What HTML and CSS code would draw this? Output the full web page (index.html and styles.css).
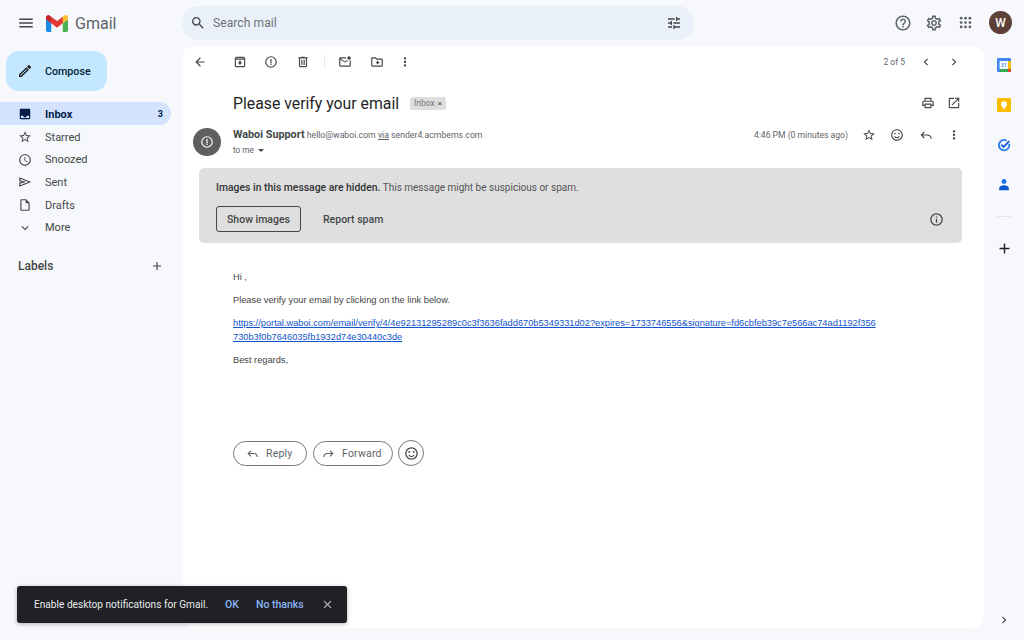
FILE: index.html
```html
<!DOCTYPE html>
<html lang="en">
<head>
<meta charset="utf-8">
<title>Gmail</title>
<link rel="stylesheet" href="styles.css">
</head>
<body>
<svg class="defs" aria-hidden="true">
<symbol id="i-menu" viewBox="0 0 24 24"><path d="M3 18h18v-2H3v2zm0-5h18v-2H3v2zm0-7v2h18V6H3z"/></symbol>
<symbol id="i-search" viewBox="0 0 24 24"><path d="M15.5 14h-.79l-.28-.27A6.471 6.471 0 0 0 16 9.5 6.5 6.5 0 1 0 9.5 16c1.61 0 3.09-.59 4.23-1.57l.27.28v.79l5 4.99L20.49 19l-4.99-5zm-6 0C7.01 14 5 11.99 5 9.5S7.01 5 9.5 5 14 7.01 14 9.5 11.99 14 9.5 14z"/></symbol>
<symbol id="i-tune" viewBox="0 0 24 24"><path d="M3 17v2h6v-2H3zM3 5v2h10V5H3zm10 16v-2h8v-2h-8v-2h-2v6h2zM7 9v2H3v2h4v2h2V9H7zm14 4v-2H11v2h10zm-6-4h2V7h4V5h-4V3h-2v6z"/></symbol>
<symbol id="i-help" viewBox="0 0 24 24"><path d="M11 18h2v-2h-2v2zm1-16C6.48 2 2 6.48 2 12s4.48 10 10 10 10-4.48 10-10S17.52 2 12 2zm0 18c-4.41 0-8-3.59-8-8s3.59-8 8-8 8 3.59 8 8-3.59 8-8 8zm0-14c-2.21 0-4 1.79-4 4h2c0-1.1.9-2 2-2s2 .9 2 2c0 2-3 1.75-3 5h2c0-2.25 3-2.5 3-5 0-2.21-1.79-4-4-4z"/></symbol>
<symbol id="i-gear" viewBox="0 0 24 24"><path d="M19.43 12.98c.04-.32.07-.64.07-.98 0-.34-.03-.66-.07-.98l2.11-1.65c.19-.15.24-.42.12-.64l-2-3.46c-.09-.16-.26-.25-.44-.25-.06 0-.12.01-.17.03l-2.49 1c-.52-.4-1.08-.73-1.69-.98l-.38-2.65C14.46 2.18 14.25 2 14 2h-4c-.25 0-.46.18-.49.42l-.38 2.65c-.61.25-1.17.59-1.69.98l-2.49-1c-.06-.02-.12-.03-.18-.03-.17 0-.34.09-.43.25l-2 3.46c-.13.22-.07.49.12.64l2.11 1.65c-.04.32-.07.65-.07.98 0 .33.03.66.07.98l-2.11 1.65c-.19.15-.24.42-.12.64l2 3.46c.09.16.26.25.44.25.06 0 .12-.01.17-.03l2.49-1c.52.4 1.08.73 1.69.98l.38 2.65c.03.24.24.42.49.42h4c.25 0 .46-.18.49-.42l.38-2.65c.61-.25 1.17-.59 1.69-.98l2.49 1c.06.02.12.03.18.03.17 0 .34-.09.43-.25l2-3.46c.12-.22.07-.49-.12-.64l-2.11-1.65zm-1.98-1.71c.04.31.05.52.05.73 0 .21-.02.43-.05.73l-.14 1.13.89.7 1.08.84-.7 1.21-1.27-.51-1.04-.42-.9.68c-.43.32-.84.56-1.25.73l-1.06.43-.16 1.13-.2 1.35h-1.4l-.19-1.35-.16-1.13-1.06-.43c-.43-.18-.83-.41-1.23-.71l-.91-.7-1.06.43-1.27.51-.7-1.21 1.08-.84.89-.7-.14-1.13c-.03-.31-.05-.54-.05-.74s.02-.43.05-.73l.14-1.13-.89-.7-1.08-.84.7-1.21 1.27.51 1.04.42.9-.68c.43-.32.84-.56 1.25-.73l1.06-.43.16-1.13.2-1.35h1.39l.19 1.35.16 1.13 1.06.43c.43.18.83.41 1.23.71l.91.7 1.06-.43 1.27-.51.7 1.21-1.07.85-.89.7.14 1.13zM12 8c-2.21 0-4 1.79-4 4s1.79 4 4 4 4-1.79 4-4-1.79-4-4-4zm0 6c-1.1 0-2-.9-2-2s.9-2 2-2 2 .9 2 2-.9 2-2 2z"/></symbol>
<symbol id="i-apps" viewBox="0 0 24 24"><circle cx="5" cy="5" r="2.2"/><circle cx="12" cy="5" r="2.2"/><circle cx="19" cy="5" r="2.2"/><circle cx="5" cy="12" r="2.2"/><circle cx="12" cy="12" r="2.2"/><circle cx="19" cy="12" r="2.2"/><circle cx="5" cy="19" r="2.2"/><circle cx="12" cy="19" r="2.2"/><circle cx="19" cy="19" r="2.2"/></symbol>
<symbol id="i-back" viewBox="0 0 24 24"><path d="M20 11H7.83l5.59-5.59L12 4l-8 8 8 8 1.41-1.41L7.83 13H20v-2z"/></symbol>
<symbol id="i-archive" viewBox="0 0 24 24"><path d="M20.54 5.23l-1.39-1.68C18.88 3.21 18.47 3 18 3H6c-.47 0-.88.21-1.16.55L3.46 5.23C3.17 5.57 3 6.02 3 6.5V19c0 1.1.9 2 2 2h14c1.1 0 2-.9 2-2V6.5c0-.48-.17-.93-.46-1.27zM6.24 5h11.52l.81.97H5.44l.8-.97zM5 19V8h14v11H5zm8.45-9h-2.9v3H8l4 4 4-4h-2.55z"/></symbol>
<symbol id="i-report" viewBox="0 0 24 24"><path d="M12 2a10 10 0 1 0 0 20 10 10 0 0 0 0-20zm0 18a8 8 0 1 1 0-16 8 8 0 0 1 0 16zM11 7h2v7h-2zm0 8h2v2h-2z"/></symbol>
<symbol id="i-delete" viewBox="0 0 24 24"><path d="M15 4V3H9v1H4v2h1v13c0 1.1.9 2 2 2h10c1.1 0 2-.9 2-2V6h1V4h-5zm2 15H7V6h10v13zM9 8h2v9H9zm4 0h2v9h-2z"/></symbol>
<symbol id="i-unread" viewBox="0 0 24 24"><path d="M22 8.98V18c0 1.1-.9 2-2 2H4c-1.1 0-2-.9-2-2V6c0-1.1.9-2 2-2h10.1c-.06.32-.1.66-.1 1s.04.68.1 1H4l8 5 3.67-2.29c.47.43 1.02.76 1.63.98L12 13 4 8v10h16V9.9c.74-.15 1.42-.48 2-.92zM16 5c0 1.66 1.34 3 3 3s3-1.34 3-3-1.34-3-3-3-3 1.34-3 3z"/></symbol>
<symbol id="i-move" viewBox="0 0 24 24"><path d="M20 6h-8l-2-2H4c-1.1 0-2 .9-2 2v12c0 1.1.9 2 2 2h16c1.1 0 2-.9 2-2V8c0-1.1-.9-2-2-2zm0 12H4V6h5.17l2 2H20v10zM12 10h2v2h2v2h-2v2h-2v-2h-2v-2h2z"/></symbol>
<symbol id="i-more" viewBox="0 0 24 24"><path d="M12 8c1.1 0 2-.9 2-2s-.9-2-2-2-2 .9-2 2 .9 2 2 2zm0 2c-1.1 0-2 .9-2 2s.9 2 2 2 2-.9 2-2-.9-2-2-2zm0 6c-1.1 0-2 .9-2 2s.9 2 2 2 2-.9 2-2-.9-2-2-2z"/></symbol>
<symbol id="i-left" viewBox="0 0 24 24"><path d="M15.41 7.41L14 6l-6 6 6 6 1.41-1.41L10.83 12z"/></symbol>
<symbol id="i-right" viewBox="0 0 24 24"><path d="M10 6L8.59 7.41 13.17 12l-4.58 4.59L10 18l6-6z"/></symbol>
<symbol id="i-print" viewBox="0 0 24 24"><path d="M19 8h-1V3H6v5H5c-1.66 0-3 1.34-3 3v6h4v4h12v-4h4v-6c0-1.66-1.34-3-3-3zM8 5h8v3H8V5zm8 12v2H8v-4h8v2zm2-2v-2H6v2H4v-4c0-.55.45-1 1-1h14c.55 0 1 .45 1 1v4h-2z"/></symbol>
<symbol id="i-open" viewBox="0 0 24 24"><path d="M19 19H5V5h7V3H5c-1.11 0-2 .9-2 2v14c0 1.1.89 2 2 2h14c1.1 0 2-.9 2-2v-7h-2v7zM14 3v2h3.59l-9.83 9.83 1.41 1.41L19 6.41V10h2V3h-7z"/></symbol>
<symbol id="i-star" viewBox="0 0 24 24"><path d="M22 9.24l-7.19-.62L12 2 9.19 8.63 2 9.24l5.46 4.73L5.82 21 12 17.27 18.18 21l-1.63-7.03L22 9.24zM12 15.4l-3.76 2.27 1-4.28-3.32-2.88 4.38-.38L12 6.1l1.71 4.04 4.38.38-3.32 2.88 1 4.28L12 15.4z"/></symbol>
<symbol id="i-smile" viewBox="0 0 24 24"><path d="M11.99 2C6.47 2 2 6.48 2 12s4.47 10 9.99 10C17.52 22 22 17.52 22 12S17.52 2 11.99 2zM12 20c-4.42 0-8-3.58-8-8s3.58-8 8-8 8 3.58 8 8-3.58 8-8 8zm3.5-9c.83 0 1.5-.67 1.5-1.5S16.33 8 15.5 8 14 8.67 14 9.5s.67 1.5 1.5 1.5zm-7 0c.83 0 1.5-.67 1.5-1.5S9.33 8 8.5 8 7 8.67 7 9.5 7.67 11 8.5 11zM7 14h1.9c.6 1.3 1.7 2 3.1 2s2.5-.7 3.1-2H17c-.7 2.2-2.6 3.6-5 3.6S7.7 16.2 7 14z"/></symbol>
<symbol id="i-reply" viewBox="0 0 24 24"><path d="M10 7.4L8.6 6 2.6 12l6 6 1.4-1.4L6.4 13H14c3.3 0 5.3 1.8 6 5.5h2c-.6-5-3.6-7.5-8-7.500H6.4z"/></symbol>
<symbol id="i-forward" viewBox="0 0 24 24"><path d="M14 7.4L15.4 6l6 6-6 6-1.4-1.4 3.6-3.6H10c-3.3 0-5.3 1.8-6 5.5H2c.6-5 3.6-7.5 8-7.500h7.6z"/></symbol>
<symbol id="i-info" viewBox="0 0 24 24"><path d="M11 7h2v2h-2zm0 4h2v6h-2zm1-9C6.48 2 2 6.48 2 12s4.48 10 10 10 10-4.48 10-10S17.52 2 12 2zm0 18c-4.41 0-8-3.59-8-8s3.59-8 8-8 8 3.59 8 8-3.59 8-8 8z"/></symbol>
<symbol id="i-edit" viewBox="0 0 24 24"><path d="M14.06 9.02l.92.92L5.92 19H5v-.92l9.06-9.06M17.66 3c-.25 0-.51.1-.7.29l-1.83 1.83 3.75 3.75 1.83-1.83c.39-.39.39-1.02 0-1.41l-2.34-2.34c-.2-.2-.45-.29-.71-.29zm-3.6 3.19L3 17.25V21h3.75L17.81 9.94l-3.75-3.75z"/></symbol>
<symbol id="i-inbox" viewBox="0 0 24 24"><path fill-rule="evenodd" d="M5 3h14c1.1 0 2 .9 2 2v14c0 1.1-.9 2-2 2H5c-1.1 0-2-.9-2-2V5c0-1.1.9-2 2-2zm0 12v4h14v-4h-4c0 1.66-1.35 3-3 3s-3-1.34-3-3z"/></symbol>
<symbol id="i-clock" viewBox="0 0 24 24"><path d="M11.99 2C6.47 2 2 6.48 2 12s4.47 10 9.99 10C17.52 22 22 17.52 22 12S17.52 2 11.99 2zM12 20c-4.42 0-8-3.58-8-8s3.58-8 8-8 8 3.58 8 8-3.58 8-8 8zm.5-13H11v6l5.25 3.15.75-1.23-4.5-2.67z"/></symbol>
<symbol id="i-send" viewBox="0 0 24 24"><path d="M3 5.2L20.5 12 3 18.8V14l8.500-2L3 10z" fill="none" stroke="#444746" stroke-width="2" stroke-linejoin="round"/></symbol>
<symbol id="i-draft" viewBox="0 0 24 24"><path d="M14 2H6c-1.1 0-1.99.9-1.99 2L4 20c0 1.1.89 2 1.99 2H18c1.1 0 2-.9 2-2V8l-6-6zM6 20V4h7v5h5v11H6z"/></symbol>
<symbol id="i-down" viewBox="0 0 24 24"><path d="M16.59 8.59L12 13.17 7.41 8.59 6 10l6 6 6-6z"/></symbol>
<symbol id="i-plus" viewBox="0 0 24 24"><path d="M19 13h-6v6h-2v-6H5v-2h6V5h2v6h6v2z"/></symbol>
<symbol id="i-close" viewBox="0 0 24 24"><path d="M19 6.41L17.59 5 12 10.59 6.41 5 5 6.41 10.59 12 5 17.59 6.41 19 12 13.41 17.59 19 19 17.59 13.41 12z"/></symbol>
</svg>

<div class="app">
  <header class="topbar">
    <div class="brand">
      <span class="icon-cell menu-cell"><svg class="ic ic-menu"><use href="#i-menu"/></svg></span>
      <svg class="gmail-logo" viewBox="3 8 42 32" aria-hidden="true">
        <path fill="#4caf50" d="M45 16.2l-5 2.75-5 4.75V40h7c1.657 0 3-1.343 3-3V16.2z"/>
        <path fill="#1e88e5" d="M3 16.2l3.614 1.71L13 23.7V40H6c-1.657 0-3-1.343-3-3V16.2z"/>
        <polygon fill="#e53935" points="35,11.2 24,19.45 13,11.2 12,17 13,23.7 24,31.95 35,23.7 36,17"/>
        <path fill="#c62828" d="M3 12.298V16.2l10 7.5V11.2L9.876 8.859C9.132 8.301 8.228 8 7.298 8 4.924 8 3 9.924 3 12.298z"/>
        <path fill="#fbc02d" d="M45 12.298V16.2l-10 7.5V11.2l3.124-2.341C38.868 8.301 39.772 8 40.702 8 43.076 8 45 9.924 45 12.298z"/>
      </svg>
      <span class="gmail-word">Gmail</span>
    </div>
    <div class="search">
      <svg class="ic ic-search"><use href="#i-search"/></svg>
      <span class="search-text">Search mail</span>
      <svg class="ic ic-tune"><use href="#i-tune"/></svg>
    </div>
    <div class="top-actions">
      <svg class="ic ic-top"><use href="#i-help"/></svg>
      <svg class="ic ic-top"><use href="#i-gear"/></svg>
      <svg class="ic ic-apps"><use href="#i-apps"/></svg>
      <span class="account">W</span>
    </div>
  </header>

  <nav class="sidebar">
    <div class="compose"><svg class="ic ic-edit"><use href="#i-edit"/></svg><span>Compose</span></div>
    <ul class="nav-list">
      <li class="nav-item active"><span class="icon-cell"><svg class="ic ic-nav"><use href="#i-inbox"/></svg></span><span class="nav-label">Inbox</span><span class="count">3</span></li>
      <li class="nav-item"><span class="icon-cell"><svg class="ic ic-nav"><use href="#i-star"/></svg></span><span class="nav-label">Starred</span></li>
      <li class="nav-item"><span class="icon-cell"><svg class="ic ic-nav"><use href="#i-clock"/></svg></span><span class="nav-label">Snoozed</span></li>
      <li class="nav-item"><span class="icon-cell"><svg class="ic ic-nav"><use href="#i-send"/></svg></span><span class="nav-label">Sent</span></li>
      <li class="nav-item"><span class="icon-cell"><svg class="ic ic-nav"><use href="#i-draft"/></svg></span><span class="nav-label">Drafts</span></li>
      <li class="nav-item"><span class="icon-cell"><svg class="ic ic-nav"><use href="#i-down"/></svg></span><span class="nav-label">More</span></li>
    </ul>
    <div class="labels"><span>Labels</span><svg class="ic ic-labelplus"><use href="#i-plus"/></svg></div>
  </nav>

  <main class="card">
    <div class="toolbar">
      <span class="tb tb-back"><svg class="ic"><use href="#i-back"/></svg></span>
      <span class="tb tb-archive"><svg class="ic"><use href="#i-archive"/></svg></span>
      <span class="tb tb-report"><svg class="ic"><use href="#i-report"/></svg></span>
      <span class="tb tb-delete"><svg class="ic"><use href="#i-delete"/></svg></span>
      <span class="tb-divider"></span>
      <span class="tb tb-unread"><svg class="ic"><use href="#i-unread"/></svg></span>
      <span class="tb tb-move"><svg class="ic"><use href="#i-move"/></svg></span>
      <span class="tb"><svg class="ic"><use href="#i-more"/></svg></span>
      <span class="pager">2 of 5</span>
      <span class="tb"><svg class="ic"><use href="#i-left"/></svg></span>
      <span class="tb"><svg class="ic"><use href="#i-right"/></svg></span>
    </div>

    <div class="subject-row">
      <h1 class="subject">Please verify your email</h1>
      <span class="chip">Inbox <span class="chip-x">×</span></span>
      <span class="subject-actions">
        <span class="tb"><svg class="ic"><use href="#i-print"/></svg></span>
        <span class="tb"><svg class="ic"><use href="#i-open"/></svg></span>
      </span>
    </div>

    <div class="msg-head">
      <span class="avatar"><svg class="ic ic-avatar"><use href="#i-report"/></svg></span>
      <div class="sender">
        <div class="sender-line"><b class="sender-name">Waboi Support</b> <span class="sender-mail">hello@waboi.com <u>via</u> sender4.acmbems.com</span></div>
        <div class="to-me">to me <span class="caret"></span></div>
      </div>
      <div class="msg-meta">
        <span class="time">4:46 PM (0 minutes ago)</span>
        <span class="tb tb-star"><svg class="ic"><use href="#i-star"/></svg></span>
        <span class="tb tb-smile"><svg class="ic"><use href="#i-smile"/></svg></span>
        <span class="tb"><svg class="ic"><use href="#i-reply"/></svg></span>
        <span class="tb"><svg class="ic"><use href="#i-more"/></svg></span>
      </div>
    </div>

    <section class="warning">
      <p class="warning-text"><b>Images in this message are hidden.</b> This message might be suspicious or spam.</p>
      <div class="warning-actions">
        <span class="btn-show">Show images</span>
        <span class="btn-report">Report spam</span>
        <svg class="ic ic-info"><use href="#i-info"/></svg>
      </div>
    </section>

    <div class="body">
      <p>Hi ,</p>
      <p>Please verify your email by clicking on the link below.</p>
      <p><a href="#">https://portal.waboi.com/email/verify/4/4e92131295289c0c3f3636fadd670b5349331d02?expires=1733746556&amp;signature=fd6cbfeb39c7e566ac74ad1192f356<br>730b3f0b7646035fb1932d74e30440c3de</a></p>
      <p>Best regards,</p>
    </div>

    <div class="reply-row">
      <span class="pill pill-reply"><svg class="ic"><use href="#i-reply"/></svg>Reply</span>
      <span class="pill pill-forward"><svg class="ic"><use href="#i-forward"/></svg>Forward</span>
      <span class="pill-round"><svg class="ic"><use href="#i-smile"/></svg></span>
    </div>
  </main>

  <aside class="rail">
    <svg class="app-ic" viewBox="0 0 16 16" aria-hidden="true">
      <rect x="0" y="0" width="16" height="16" rx="1.5" fill="#4285f4"/>
      <path fill="#ea4335" d="M12.5 16H15a1 1 0 0 0 1-1v-2.5h-3.5z"/>
      <path fill="#34a853" d="M3 12.5h9.5V16H3z"/>
      <path fill="#fbbc04" d="M12.5 3.5H16v9h-3.5z"/>
      <rect x="3" y="3.5" width="9.5" height="9" fill="#fff"/>
      <text class="cal-num" x="7.75" y="10.3">31</text>
    </svg>
    <svg class="app-ic" viewBox="0 0 16 16" aria-hidden="true">
      <rect width="16" height="16" rx="1.5" fill="#fbbc04"/>
      <circle cx="8" cy="7" r="3.4" fill="#fff"/>
      <rect x="6.4" y="10.5" width="3.2" height="1.7" fill="#fff"/>
    </svg>
    <svg class="app-ic" viewBox="0 0 16 16" aria-hidden="true">
      <path fill="none" stroke="#2f7ff0" stroke-width="2.2" d="M13.9 6.5A6 6 0 1 1 11 2.9"/>
      <path fill="none" stroke="#1a5fd0" stroke-width="2.2" d="M4.8 7.8L7.6 10.3 14 3.5"/>
    </svg>
    <svg class="app-ic" viewBox="0 0 16 16" aria-hidden="true">
      <circle cx="8" cy="4" r="2.8" fill="#1a73e8"/>
      <path fill="#0b57d0" d="M2.5 14v-2c0-2.3 2.7-3.6 5.5-3.600s5.500 1.300 5.500 3.600v2z"/>
    </svg>
    <span class="rail-divider"></span>
    <svg class="ic ic-railplus"><use href="#i-plus"/></svg>
    <svg class="ic ic-railright"><use href="#i-right"/></svg>
  </aside>
</div>

<div class="toast">
  <span class="toast-text">Enable desktop notifications for Gmail.</span>
  <span class="toast-ok">OK</span>
  <span class="toast-no">No thanks</span>
  <svg class="ic ic-toastclose"><use href="#i-close"/></svg>
</div>
</body>
</html>
```

FILE: styles.css
```css
* { box-sizing: border-box; }
html, body { margin: 0; padding: 0; height: 100%; }
body {
  background: #f6f8fc;
  font-family: Roboto, "Liberation Sans", sans-serif;
  color: #444746;
  overflow: hidden;
}
.defs { position: absolute; width: 0; height: 0; }
.ic { display: block; width: 15px; height: 15px; fill: #444746; flex: none; }

.app {
  display: grid;
  grid-template-columns: 182px 802px 40px;
  grid-template-rows: 46px 582px 12px;
  width: 1024px;
  height: 640px;
}

/* top bar */
.topbar { grid-column: 1 / 4; grid-row: 1; display: flex; align-items: flex-start; }
.brand { width: 182px; height: 46px; display: flex; align-items: center; }
.icon-cell { display: flex; justify-content: center; align-items: center; width: 50px; flex: none; }
.menu-cell { width: 46px; padding-left: 11px; padding-right: 6px; }
.ic-menu { width: 18px; height: 18px; }
.gmail-logo { width: 22px; height: 17px; flex: none; }
.gmail-word { margin-left: 7px; font-size: 16px; color: #5f6368; }
.search {
  margin-top: 6px;
  width: 512px;
  height: 34px;
  border-radius: 17px;
  background: #e9f0fa;
  display: flex;
  align-items: center;
  padding: 0 12px 0 8px;
}
.ic-search { width: 16px; height: 16px; }
.search-text { margin-left: 7px; font-size: 12px; color: #6d7175; flex: 1; letter-spacing: .1px; }
.ic-tune { width: 16px; height: 16px; }
.top-actions { display: flex; align-items: center; height: 45px; margin-left: 200px; }
.ic-top { width: 18px; height: 18px; margin-right: 13px; fill: #5f6368; }
.ic-apps { width: 15px; height: 15px; margin-right: 16px; margin-left: 2px; fill: #5f6368; }
.account {
  width: 23px; height: 23px; border-radius: 50%;
  background: #5d4037; color: #fff;
  font-size: 12px; font-weight: 500;
  display: flex; align-items: center; justify-content: center;
}

/* sidebar */
.sidebar { grid-column: 1; grid-row: 2 / 4; }
.compose {
  margin: 5px 0 0 6px;
  width: 101px; height: 40px;
  border-radius: 13px;
  background: #c2e7ff;
  color: #001d35;
  font-size: 10.700px; font-weight: 500;
  display: flex; align-items: center;
}
.ic-edit { width: 16px; height: 16px; margin: 0 12px 0 11px; fill: #111; }
.nav-list { list-style: none; margin: 11px 0 0; padding: 0; }
.nav-item {
  display: flex; align-items: center;
  width: 171px; height: 22.700px;
  padding-top: 2px;
  font-size: 11px; color: #444746;
  border-radius: 0 12px 12px 0;
}
.nav-item.active { background: #d3e3fd; color: #041e49; font-weight: 700; }
.nav-item.active .ic { fill: #041e49; }
.ic-nav { width: 14px; height: 14px; }
.nav-label { margin-left: -5px; flex: 1; }
.count { font-size: 9px; margin-right: 8px; }
.labels {
  margin: 21px 0 0 18px;
  width: 146px;
  display: flex; justify-content: space-between; align-items: center;
  font-size: 12px; font-weight: 500; color: #444746;
}
.ic-labelplus { width: 14px; height: 14px; }

/* card */
.card {
  grid-column: 2; grid-row: 2;
  background: #fff;
  border-radius: 12px;
  display: flex; flex-direction: column;
  min-width: 0;
}
.tb { width: 28px; height: 28px; display: flex; align-items: center; justify-content: center; flex: none; }
.toolbar { height: 32px; display: flex; align-items: center; padding-left: 4px; padding-right: 16px; }
.toolbar .ic { width: 14px; height: 14px; }
.tb-archive { margin-left: 12px; }
.tb-report { margin-left: 3px; }
.tb-delete { margin-left: 4px; }
.tb-divider { width: 1px; height: 14px; background: #e9eaeb; margin: 0 6px 0 7px; }
.tb-move { margin-left: 4px; }
.pager { margin-left: auto; font-size: 8.500px; color: #5f6368; margin-right: 7px; }

.subject-row { margin-top: 11px; height: 28px; display: flex; align-items: center; padding-left: 51px; padding-right: 17px; }
.subject { margin: 0; font-size: 15.800px; font-weight: 400; color: #1f1f1f; }
.chip {
  margin-left: 11px;
  height: 13px; width: 36px;
  border-radius: 2px;
  background: #dddddd;
  color: #777;
  font-size: 8.500px;
  display: flex; align-items: center; justify-content: center; gap: 3px;
}
.chip-x { font-size: 8px; color: #444; }
.subject-actions { margin-left: auto; display: flex; }
.subject-actions .tb { width: 26px; }
.subject-actions .ic { width: 14px; height: 14px; }

.msg-head { margin-top: 11px; display: flex; align-items: flex-start; padding-left: 11px; padding-right: 16px; height: 29px; }
.avatar {
  width: 28px; height: 28px; border-radius: 50%; background: #5f5f5f;
  display: flex; align-items: center; justify-content: center; flex: none;
}
.ic-avatar { width: 14px; height: 14px; fill: #fff; }
.sender { margin-left: 12px; flex: 1; }
.sender-line { line-height: 14px; font-size: 8.700px; color: #5f6368; }
.sender-name { font-size: 10.800px; color: #444746; font-weight: 700; }
.to-me { font-size: 8.200px; color: #5f6368; line-height: 14px; margin-top: 1px; display: flex; align-items: center; gap: 4px; }
.caret { width: 0; height: 0; border-left: 3.500px solid transparent; border-right: 3.500px solid transparent; border-top: 3.500px solid #444746; }
.msg-meta { display: flex; align-items: center; height: 14px; }
.msg-meta .ic { width: 14px; height: 14px; }
.time { font-size: 8.600px; color: #5f6368; margin-right: 7px; }
.tb-smile { margin-right: 1px; }

.warning {
  margin: 11px 22px 0 17px;
  height: 75px;
  background: #dfdfdf;
  border-radius: 5px;
  padding: 13px 17px 0;
}
.warning-text { margin: 0; font-size: 10px; line-height: 14px; color: #555; }
.warning-text b { color: #333; font-weight: 500; font-size: 10.400px; }
.warning-actions { display: flex; align-items: center; margin-top: 11px; height: 26px; }
.btn-show {
  width: 85px; height: 26px;
  border: 1px solid #444746; border-radius: 3px;
  font-size: 10.500px; font-weight: 500; color: #444746;
  display: flex; align-items: center; justify-content: center;
}
.btn-report { margin-left: 22px; font-size: 10.500px; font-weight: 500; color: #444746; flex: 1; }
.ic-info { width: 15px; height: 15px; margin-right: 1px; }

.body { margin: 27px 0 0 51px; font-family: "Liberation Sans", Arial, sans-serif; font-size: 9.250px; line-height: 14px; color: #444; }
.body p { margin: 0 0 9px; }
.body a { color: #1155cc; }

.reply-row { margin: 64px 0 0 51px; display: flex; align-items: center; }
.pill {
  height: 25px; border: 1px solid #747775; border-radius: 13px;
  font-size: 10.500px; font-weight: 400; letter-spacing: .2px; color: #5f6368;
  display: flex; align-items: center;
}
.pill .ic { width: 13px; height: 13px; margin-right: 7px; fill: #5f6368; }
.pill-reply { width: 74px; padding-left: 12px; }
.pill-forward { width: 80px; margin-left: 6px; padding-left: 8px; }
.pill-round {
  width: 26px; height: 26px; border: 1px solid #747775; border-radius: 50%; margin-left: 5px;
  display: flex; align-items: center; justify-content: center;
}
.pill-round .ic { width: 15px; height: 15px; }

/* rail */
.rail { grid-column: 3; grid-row: 2 / 4; display: flex; flex-direction: column; align-items: center; }
.app-ic { display: block; width: 14px; height: 14px; flex: none; margin-top: 12px; }
.rail .app-ic + .app-ic { margin-top: 26px; }
.cal-num { font-family: Roboto, sans-serif; font-size: 6px; font-weight: 500; fill: #4285f4; text-anchor: middle; }
.rail-divider { width: 14px; height: 1px; background: #e3e5e8; margin-top: 24px; }
.ic-railplus { width: 17px; height: 17px; margin-top: 23px; fill: #1f1f1f; }
.ic-railright { width: 14px; height: 14px; margin-top: auto; margin-bottom: 13px; }

/* toast */
.toast {
  position: absolute; left: 17px; top: 586px;
  width: 330px; height: 37px;
  background: #202124; border-radius: 3px;
  box-shadow: 0 1px 4px rgba(0,0,0,.3);
  display: flex; align-items: center;
  padding-left: 17px;
  font-size: 10.500px; font-weight: 500;
  color: #e8eaed;
}
.toast-text { width: 191px; font-size: 10.150px; font-weight: 400; white-space: nowrap; }
.toast-ok { color: #8ab4f8; width: 31px; }
.toast-no { color: #8ab4f8; width: 65px; }
.ic-toastclose { width: 13px; height: 13px; fill: #bdc1c6; }
```
